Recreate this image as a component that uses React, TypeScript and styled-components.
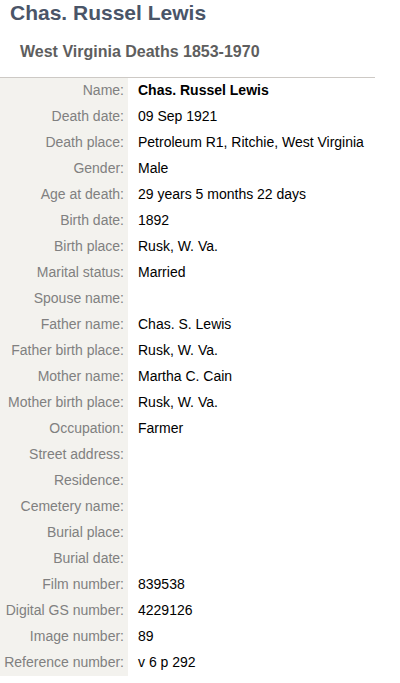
import styled, { createGlobalStyle } from 'styled-components';

const GlobalStyle = createGlobalStyle`
  body {
    margin: 0;
    background: #fff;
    font-family: 'Liberation Sans', Arial, sans-serif;
  }
`;

const Page = styled.div`
  width: 400px;
`;

const Title = styled.h1`
  margin: 0;
  padding: 1px 0 0 10px;
  height: 26px;
  font-size: 21px;
  font-weight: bold;
  color: #4a5568;
  line-height: 24px;
`;

const Subtitle = styled.h2`
  margin: 0;
  padding: 16px 0 0 20px;
  height: 34px;
  font-size: 16px;
  font-weight: bold;
  color: #5e5e5e;
  line-height: 18px;
  border-bottom: 1px solid #cdc9c5;
  width: 355px;
`;

const Records = styled.div`
  display: grid;
  grid-template-columns: 128px 1fr;
  padding-bottom: 6px;
`;

const Label = styled.div`
  background: #f3f2ee;
  color: #808080;
  font-size: 14px;
  height: 26px;
  line-height: 25px;
  text-align: right;
  padding-right: 4px;
  white-space: nowrap;
`;

const Value = styled.div<{ $bold?: boolean }>`
  color: #000;
  font-size: 14px;
  height: 26px;
  line-height: 25px;
  padding-left: 10px;
  font-weight: ${(p) => (p.$bold ? 'bold' : 'normal')};
  white-space: nowrap;
`;

const rows: [string, string][] = [
  ['Name', 'Chas. Russel Lewis'],
  ['Death date', '09 Sep 1921'],
  ['Death place', 'Petroleum R1, Ritchie, West Virginia'],
  ['Gender', 'Male'],
  ['Age at death', '29 years 5 months 22 days'],
  ['Birth date', '1892'],
  ['Birth place', 'Rusk, W. Va.'],
  ['Marital status', 'Married'],
  ['Spouse name', ''],
  ['Father name', 'Chas. S. Lewis'],
  ['Father birth place', 'Rusk, W. Va.'],
  ['Mother name', 'Martha C. Cain'],
  ['Mother birth place', 'Rusk, W. Va.'],
  ['Occupation', 'Farmer'],
  ['Street address', ''],
  ['Residence', ''],
  ['Cemetery name', ''],
  ['Burial place', ''],
  ['Burial date', ''],
  ['Film number', '839538'],
  ['Digital GS number', '4229126'],
  ['Image number', '89'],
  ['Reference number', 'v 6 p 292'],
];

const App = () => {
  return (
    <>
      <GlobalStyle />
      <Page>
        <Title>Chas. Russel Lewis</Title>
        <Subtitle>West Virginia Deaths 1853-1970</Subtitle>
        <Records>
          {rows.map(([label, value], i) => [
            <Label key={'l' + label}>{label}:</Label>,
            <Value key={'v' + label} $bold={i === 0}>
              {value}
            </Value>,
          ])}
        </Records>
      </Page>
    </>
  );
};

export default App;
